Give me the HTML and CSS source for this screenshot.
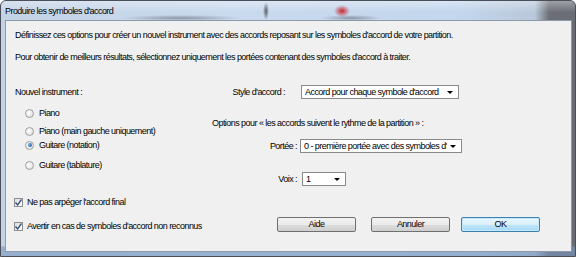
FILE: index.html
```html
<!DOCTYPE html>
<html lang="fr">
<head>
<meta charset="utf-8">
<title>Produire les symboles d'accord</title>
<link rel="stylesheet" href="styles.css">
</head>
<body>
<div class="window">
  <div class="titlebar">Produire les symboles d'accord</div>
  <div class="client">
    <p class="intro intro-1">Définissez ces options pour créer un nouvel instrument avec des accords reposant sur les symboles d'accord de votre partition.</p>
    <p class="intro intro-2">Pour obtenir de meilleurs résultats, sélectionnez uniquement les portées contenant des symboles d'accord à traiter.</p>
    <div class="main">
      <div class="left">
        <div class="group-label">Nouvel instrument :</div>
        <label class="radio r1"><span class="rb"></span>Piano</label>
        <label class="radio r2"><span class="rb"></span>Piano (main gauche uniquement)</label>
        <label class="radio r3"><span class="rb on"></span>Guitare (notation)</label>
        <label class="radio r4"><span class="rb"></span>Guitare (tablature)</label>
        <label class="check c1"><span class="cb"><svg viewBox="0 0 9 9" width="9" height="9"><path d="M1.5 4.5 L3.6 7 L7.5 1.5" fill="none" stroke="#3a4f7a" stroke-width="1.3"/></svg></span>Ne pas arpéger l'accord final</label>
        <label class="check c2"><span class="cb"><svg viewBox="0 0 9 9" width="9" height="9"><path d="M1.5 4.5 L3.6 7 L7.5 1.5" fill="none" stroke="#3a4f7a" stroke-width="1.3"/></svg></span>Avertir en cas de symboles d'accord non reconnus</label>
      </div>
      <div class="right">
        <div class="row row-style">
          <span class="lbl lbl-style">Style d'accord :</span>
          <div class="combo combo-style"><span class="clip">Accord pour chaque symbole d'accord</span><span class="arrow"></span></div>
        </div>
        <div class="options">Options pour « les accords suivent le rythme de la partition » :</div>
        <div class="row row-portee">
          <span class="lbl">Portée :</span>
          <div class="combo combo-portee"><span class="clip">0 - première portée avec des symboles d'accord</span><span class="arrow"></span></div>
        </div>
        <div class="row row-voix">
          <span class="lbl">Voix :</span>
          <div class="combo combo-voix"><span class="clip">1</span><span class="arrow"></span></div>
        </div>
        <div class="buttons">
          <button class="btn">Aide</button>
          <button class="btn">Annuler</button>
          <button class="btn default">OK</button>
        </div>
      </div>
    </div>
  </div>
</div>
</body>
</html>
```
FILE: styles.css
```css
* { box-sizing: border-box; }
html, body {
  margin: 0;
  padding: 0;
  width: 577px;
  height: 258px;
  overflow: hidden;
  background: #ffffff;
}
body {
  font-family: "Liberation Sans", Arial, sans-serif;
  font-size: 9px;
  letter-spacing: -0.55px;
  color: #000;
}
.window {
  width: 576px;
  height: 257px;
  border: 1px solid #4a4e58;
  border-radius: 6px 6px 0 0;
  display: flex;
  flex-direction: column;
  background:
    linear-gradient(to bottom, rgba(0,0,0,0) 0, rgba(0,0,0,0) 245px, rgba(120,150,190,0.6) 246px, rgba(120,150,190,0.6) 100%),
    linear-gradient(to right, #c3d3e6 0%, #c9daee 40%, #c3d6ed 80%, #b9c8da 93%, #6c6f77 95.5%, #6a6d75 100%);
  overflow: hidden;
}
.titlebar {
  height: 19px;
  flex: none;
  padding: 3px 0 0 4px;
  line-height: 14px;
  color: #000;
  background:
    radial-gradient(ellipse 8px 6px at 341px 10px, rgba(200,20,30,0.9), rgba(200,20,30,0) 100%),
    radial-gradient(ellipse 3px 9px at 265px 10px, rgba(60,60,65,0.8), rgba(60,60,65,0) 100%),
    radial-gradient(ellipse 60px 3px at 180px 17px, rgba(70,70,80,0.45), rgba(70,70,80,0) 100%),
    radial-gradient(ellipse 30px 3px at 350px 17px, rgba(70,70,80,0.45), rgba(70,70,80,0) 100%),
    linear-gradient(to bottom, rgba(255,255,255,0.35), rgba(255,255,255,0) 60%);
}
.client {
  flex: 1;
  margin: 0 3px 4px 4px;
  border: 1px solid #8d9aab;
  background: #f0f0f0;
  padding: 7px 0 0 9px;
}
.intro {
  margin: 0;
  line-height: 14px;
  white-space: nowrap;
}
.intro-2 { margin-top: 8px; }
.main {
  display: grid;
  grid-template-columns: 197px 1fr;
  margin-top: 20px;
}
.left, .right {
  display: flex;
  flex-direction: column;
  align-items: flex-start;
}
.group-label { line-height: 14px; margin-top: 1px; }
.radio, .check {
  display: flex;
  align-items: center;
  line-height: 14px;
  height: 14px;
  white-space: nowrap;
}
.radio { margin-left: 10px; }
.r1 { margin-top: 7px; }
.r2 { margin-top: 4px; }
.r3 { margin-top: 0; }
.r4 { margin-top: 6px; }
.rb {
  width: 9px;
  height: 9px;
  border-radius: 50%;
  border: 1px solid #a0a0a0;
  background: radial-gradient(circle at 40% 40%, #ffffff 0, #e8e8e8 60%, #d2d2d2 100%);
  margin-right: 5px;
  flex: none;
  position: relative;
}
.rb.on::after {
  content: "";
  position: absolute;
  left: 1.5px; top: 1.5px;
  width: 4px; height: 4px;
  border-radius: 50%;
  background: radial-gradient(circle at 40% 40%, #6fb3e8, #1c5b9a 80%);
}
.check { margin-left: -1px; }
.c1 { margin-top: 23px; }
.c2 { margin-top: 10px; }
.cb {
  width: 9px;
  height: 9px;
  border: 1px solid #8e8f8f;
  background: linear-gradient(135deg, #dcdcdc, #ffffff);
  margin-right: 4px;
  flex: none;
  display: flex;
  align-items: center;
  justify-content: center;
}
.cb svg { display: block; margin: -1px; }
.row {
  display: flex;
  align-items: center;
  height: 14px;
}
.lbl { text-align: right; white-space: nowrap; }
.lbl-style { width: 73px; margin-right: 16px; }
.row-portee .lbl, .row-voix .lbl { width: 85px; }
.row-style { margin-top: 1px; }
.options { margin-top: 17px; line-height: 14px; white-space: nowrap; }
.row-portee { margin-top: 9px; }
.row-portee .lbl { margin-right: 3px; }
.row-voix { margin-top: 19px; }
.row-voix .lbl { margin-right: 5px; }
.combo {
  height: 14px;
  border: 1px solid #8a8a8a;
  background: #fff;
  line-height: 12px;
  padding: 0 14px 0 3px;
  position: relative;
  white-space: nowrap;
}
.combo-style { width: 158px; }
.combo-portee { width: 162px; }
.combo-voix { width: 44px; }
.clip { display: block; overflow: hidden; white-space: nowrap; }
.arrow {
  position: absolute;
  right: 5px;
  top: 5px;
  width: 0; height: 0;
  border-left: 3px solid transparent;
  border-right: 3px solid transparent;
  border-top: 3px solid #000;
}
.buttons {
  display: flex;
  margin-top: 31px;
  margin-left: 65px;
}
.btn {
  font: inherit;
  letter-spacing: inherit;
  width: 79px;
  height: 15px;
  padding: 0;
  line-height: 13px;
  border: 1px solid #707070;
  border-radius: 2px;
  background: linear-gradient(to bottom, #f2f2f2 0%, #ebebeb 50%, #dddddd 51%, #cfcfcf 100%);
  color: #000;
}
.btn + .btn { margin-left: 15px; }
.btn.default {
  margin-left: 11px;
  border-color: #3c7fb1;
  background: linear-gradient(to bottom, #eaf6fd 0%, #d9f0fc 50%, #bee6fd 51%, #a7d9f5 100%);
  box-shadow: inset 0 0 0 1px #c6e8fb;
}
```
